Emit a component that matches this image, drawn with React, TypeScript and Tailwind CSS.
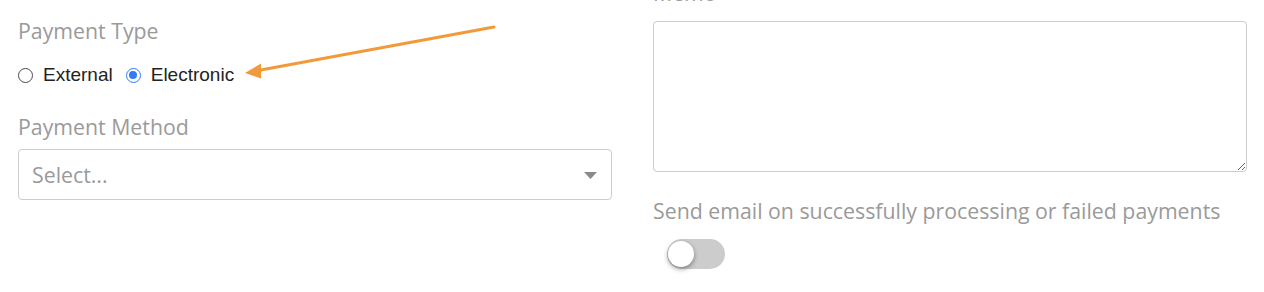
import { useState } from 'react'

const labelCls = "block text-[21.3px] leading-[30px] text-[#9a9a9a] font-['Open_Sans',sans-serif]"

function Radio({ checked, label }: { checked: boolean; label: string }) {
  return (
    <label className="flex items-center gap-[10px] cursor-pointer">
      {checked ? (
        <span className="flex h-[15px] w-[15px] items-center justify-center rounded-full border-[1.5px] border-[#2f7cf6] bg-white">
          <span className="h-[8px] w-[8px] rounded-full bg-[#2f7cf6]" />
        </span>
      ) : (
        <span className="h-[15px] w-[15px] rounded-full border border-[#4a4a4a] bg-white" />
      )}
      <span className="text-[19px] leading-[30px] text-[#222] font-['Liberation_Sans',Arial,sans-serif]">{label}</span>
    </label>
  )
}

export default function App() {
  const [type] = useState<'external' | 'electronic'>('electronic')
  const [notify] = useState(false)

  return (
    <div className="relative h-[292px] w-[1264px] overflow-hidden bg-white">
      <div className="grid grid-cols-[594px_594px] gap-x-[41px] pl-[18px]">
        {/* Left column */}
        <div className="pt-[16px]">
          <span className={labelCls}>Payment Type</span>
          <div className="mt-[14px] flex items-center gap-[13px]">
            <Radio checked={type === 'external'} label="External" />
            <Radio checked={type === 'electronic'} label="Electronic" />
          </div>

          <span className={`${labelCls} mt-[22px]`}>Payment Method</span>
          <div className="mt-[7px] flex h-[51px] items-center justify-between rounded-[4px] border border-[#cccccc] bg-white pl-[13px] pr-[14px]">
            <span className="text-[21.3px] text-[#9a9a9a] font-['Open_Sans',sans-serif]">Select...</span>
            <svg width="13" height="7" viewBox="0 0 13 7" className="mt-[1px]">
              <path d="M0 0 H13 L6.5 7 Z" fill="#8a8a8a" />
            </svg>
          </div>
        </div>

        {/* Right column */}
        <div>
          <span className={`${labelCls} mt-[-22px]`}>Memo</span>
          <textarea className="mt-[13px] block h-[151px] w-full rounded-[4px] border border-[#cccccc] bg-white p-3 outline-none" />

          <span className={`${labelCls} mt-[24px]`}>Send email on successfully processing or failed payments</span>
          <div className="mt-[13px] pl-[14px]">
            <button
              className={`relative h-[30px] w-[58px] rounded-full ${notify ? 'bg-[#2f7cf6]' : 'bg-[#cccccc]'}`}
            >
              <span className="absolute left-[1px] top-[2px] h-[26px] w-[26px] rounded-full bg-white shadow-[0_2px_5px_rgba(0,0,0,0.4)]" />
            </button>
          </div>
        </div>
      </div>

      {/* Annotation arrow */}
      <svg className="pointer-events-none absolute left-0 top-0" width="1264" height="292">
        <line x1="494" y1="27" x2="258" y2="70.5" stroke="#f29a3a" strokeWidth="3" strokeLinecap="round" />
        <path d="M245 73 L261 63.5 L261 78.5 Z" fill="#f29a3a" />
      </svg>
    </div>
  )
}
